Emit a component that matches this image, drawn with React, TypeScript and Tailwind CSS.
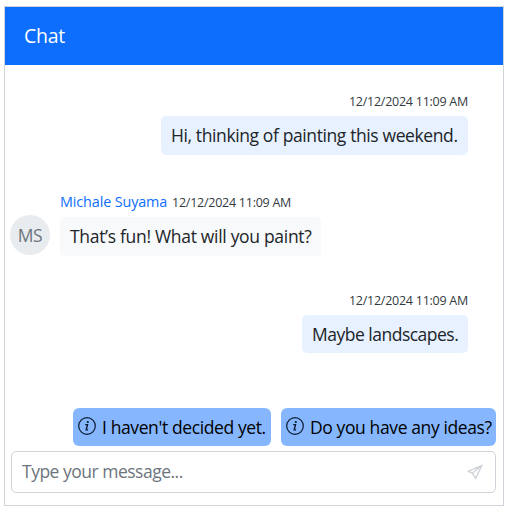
import React from "react";

function Stamp() {
  return (
    <span className="text-[12.5px] leading-[18px] tracking-[-0.25px] text-[#343a40]">
      12/12/2024 11:09 AM
    </span>
  );
}

function InfoIcon() {
  return (
    <svg className="mt-[9px] h-[18px] w-[18px] shrink-0" viewBox="0 0 18 18" fill="none">
      <circle cx="9" cy="9" r="8.3" stroke="#0b1a30" strokeWidth="1.2" />
      <circle cx="9.8" cy="5" r="1.1" fill="#0b1a30" />
      <path d="M7.2 7.6H9.5L8.2 12.9H10.1" stroke="#0b1a30" strokeWidth="1.4" />
    </svg>
  );
}

function SendIcon() {
  return (
    <svg className="h-4 w-4" viewBox="0 0 16 16" fill="none" stroke="#ced4da" strokeWidth="1.4" strokeLinejoin="round">
      <path d="M15 1.3L1.2 7.3L5.4 9.2L8.6 14.4L15 1.3ZM5.4 9.2L15 1.3" />
    </svg>
  );
}

export default function App() {
  return (
    <div className="h-[508px] w-[507px] overflow-hidden bg-white pl-[4px] pt-[6px] font-['Open_Sans',sans-serif] text-[#212529]">
      <div className="flex h-[500px] w-[500px] flex-col border border-[#ced4da]">
        <header className="h-[58px] shrink-0 bg-[#0d6efd] pl-[19px] text-[19.5px] leading-[58px] tracking-[-0.3px] text-white">
          Chat
        </header>
        <main className="flex h-[343px] shrink-0 flex-col pl-[5px] pr-[35px] pt-[28px]">
          <section className="flex h-[101px] flex-col items-end">
            <Stamp />
            <p className="mt-[5px] h-[39px] w-[307px] whitespace-nowrap rounded-[5px] bg-[#e7f1ff] pl-[10px] text-[17.5px] leading-[39px] tracking-[-0.39px]">
              Hi, thinking of painting this weekend.
            </p>
          </section>
          <section className="flex h-[98px] gap-[10px]">
            <div className="mt-[21px] h-10 w-10 shrink-0 rounded-full bg-[#e9ecef] text-center text-[17.5px] leading-[40px] tracking-[-0.3px] text-[#6c757d]">
              MS
            </div>
            <div>
              <div className="flex h-[23px] whitespace-nowrap">
                <span className="w-[112px] text-[14.4px] leading-[15px] tracking-[-0.13px] text-[#0d6efd]">Michale Suyama</span>
                <Stamp />
              </div>
              <p className="h-[39px] w-[261px] whitespace-nowrap rounded-[5px] bg-[#f8f9fa] pl-[10px] text-[17.5px] leading-[39px] tracking-[-0.31px]">
                That’s fun! What will you paint?
              </p>
            </div>
          </section>
          <section className="flex flex-col items-end">
            <Stamp />
            <p className="mt-[5px] h-[38px] w-[166px] whitespace-nowrap rounded-[5px] bg-[#e7f1ff] pl-[10px] text-[17.5px] leading-[39px] tracking-[-0.5px]">
              Maybe landscapes.
            </p>
          </section>
        </main>
        <div className="flex h-[38px] shrink-0 justify-end gap-[10px] pr-[7px] text-[17.5px] leading-[39px] tracking-[-0.39px] text-black">
          <button className="flex w-[198px] gap-[6px] whitespace-nowrap rounded-[6px] bg-[#86b7fe] pl-[5px]">
            <InfoIcon />
            <span>I haven't decided yet.</span>
          </button>
          <button className="flex w-[215px] gap-[6px] whitespace-nowrap rounded-[6px] bg-[#86b7fe] pl-[5px]">
            <InfoIcon />
            <span>Do you have any ideas?</span>
          </button>
        </div>
        <div className="ml-[6px] mt-[5px] flex h-[42px] w-[485px] shrink-0 items-center justify-between rounded-[5px] border border-[#ced4da] pl-[10px] pr-[12px]">
          <span className="pb-[2px] text-[17.5px] leading-[38px] tracking-[-0.5px] text-[#6c757d]">Type your message...</span>
          <SendIcon />
        </div>
      </div>
    </div>
  );
}
